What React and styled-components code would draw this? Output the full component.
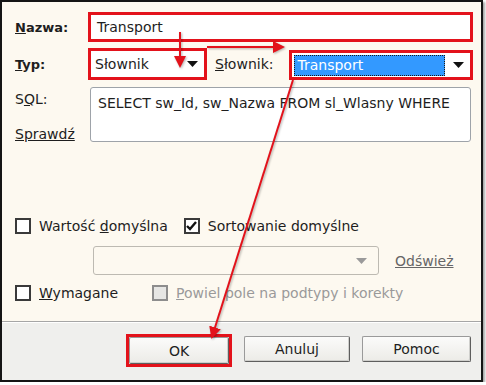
import React from 'react';
import styled, { createGlobalStyle } from 'styled-components';

const GlobalStyle = createGlobalStyle`
  html, body {
    margin: 0;
    padding: 0;
    background: #ffffff;
  }
  body {
    font-family: "DejaVu Sans", Verdana, sans-serif;
    font-size: 14px;
    color: #1e1e1e;
  }
`;

const RED = '#e3121b';

const Frame = styled.div`
  position: relative;
  width: 483px;
  height: 382px;
  box-sizing: border-box;
  border: 2px solid #151515;
  display: flex;
  flex-direction: column;
  box-shadow: 2px 2px 2px rgba(0, 0, 0, 0.35);
  overflow: hidden;
`;

const Body = styled.div`
  flex: 1;
  background: #fdf9f0;
  padding: 10px 8px 0 13px;
  display: flex;
  flex-direction: column;
`;

const Row = styled.div`
  display: flex;
  align-items: ${({ $align }) => $align || 'center'};
  height: ${({ $h }) => $h}px;
  margin-top: ${({ $mt }) => $mt || 0}px;
`;

const Label = styled.div`
  width: 73px;
  flex-shrink: 0;
  font-weight: ${({ $bold }) => ($bold ? 'bold' : 'normal')};
  font-size: ${({ $bold }) => ($bold ? '13px' : '14px')};
  color: #1e1e1e;
`;

const LabelColumn = styled.div`
  width: 73px;
  flex-shrink: 0;
  height: 100%;
  display: flex;
  flex-direction: column;
  justify-content: space-between;
  padding: 4px 0 0;
  box-sizing: border-box;
`;

const Link = styled.span`
  text-decoration: underline;
  color: ${({ $muted }) => ($muted ? '#666' : '#1e1e1e')};
`;

const U = styled.span`
  text-decoration: underline;
`;

const Highlight = styled.div`
  box-sizing: border-box;
  border: 3px solid ${RED};
  background: #ffffff;
  width: ${({ $w }) => ($w ? `${$w}px` : 'auto')};
  flex: ${({ $w }) => ($w ? 'none' : '1')};
  height: ${({ $h }) => $h}px;
  display: flex;
  align-items: center;
  padding: 0 6px 0 ${({ $pl }) => $pl || 6}px;
`;

const FieldText = styled.span`
  flex: 1;
  white-space: nowrap;
`;

const Selected = styled.span`
  flex: 1;
  height: 19px;
  margin-right: 8px;
  background: #3399ff;
  color: #ffffff;
  border: 1px dotted #1a1a1a;
  display: flex;
  align-items: center;
  padding-left: 2px;
`;

const Arrow = ({ muted }) => (
  <svg width="11" height="6" viewBox="0 0 11 6" style={{ flexShrink: 0 }}>
    <path d="M0 0 L11 0 L5.5 6 Z" fill={muted ? '#9a9a9a' : '#111'} />
  </svg>
);

const MidLabel = styled.span`
  margin: 0 16px 0 8px;
  white-space: nowrap;
`;

const TextArea = styled.div`
  flex: 1;
  height: 100%;
  margin: 0 2px;
  box-sizing: border-box;
  border: 1px solid #9ea3a9;
  border-radius: 3px;
  background: #ffffff;
  padding: 7px 0 0 7px;
  white-space: nowrap;
  overflow: hidden;
`;

const CheckRow = styled.div`
  display: flex;
  align-items: center;
  height: 18px;
  margin-top: ${({ $mt }) => $mt}px;
`;

const CheckItem = styled.label`
  display: flex;
  align-items: center;
  gap: 8px;
  margin-right: ${({ $mr }) => $mr || 0}px;
  color: ${({ $disabled }) => ($disabled ? '#9a9a9a' : '#1e1e1e')};
  white-space: nowrap;
`;

const Box = styled.span`
  width: 16px;
  height: 16px;
  box-sizing: border-box;
  border: 2px solid ${({ $disabled }) => ($disabled ? '#8d8d8d' : '#3a3a3a')};
  background: ${({ $disabled }) => ($disabled ? '#e6e6e4' : '#ffffff')};
  display: flex;
  align-items: center;
  justify-content: center;
`;

const Check = ({ checked, disabled, children, mr }) => (
  <CheckItem $disabled={disabled} $mr={mr}>
    <Box $disabled={disabled}>
      {checked && (
        <svg width="11" height="10" viewBox="0 0 11 10">
          <path d="M1 5 L4 8 L10 1" stroke="#111" strokeWidth="2.4" fill="none" />
        </svg>
      )}
    </Box>
    <span>{children}</span>
  </CheckItem>
);

const ComboRow = styled.div`
  display: flex;
  align-items: center;
  height: 29px;
  margin-top: 11px;
  padding-left: 78px;
`;

const DisabledCombo = styled.div`
  width: 286px;
  height: 100%;
  box-sizing: border-box;
  border: 1px solid #bdbab2;
  border-radius: 3px;
  display: flex;
  align-items: center;
  justify-content: flex-end;
  padding-right: 11px;
  margin-right: 16px;
`;

const Footer = styled.div`
  height: 59px;
  box-sizing: border-box;
  border-top: 1px solid #a6a6a6;
  box-shadow: inset 0 1px 0 #ffffff;
  background: #efefed;
  display: flex;
  align-items: flex-start;
  padding: 12px 0 0 124px;
  gap: 12px;
`;

const OkHighlight = styled.div`
  border: 3px solid ${RED};
  padding: 0;
  display: flex;
`;

const Button = styled.button`
  width: ${({ $w }) => $w}px;
  height: ${({ $h }) => $h || 26}px;
  margin-top: ${({ $mt }) => $mt || 0}px;
  font-family: "DejaVu Sans", Verdana, sans-serif;
  font-size: 14px;
  color: #1e1e1e;
  background: linear-gradient(#fbfbfa, #ecebe7);
  border: 1px solid #9a9a9a;
  border-right-color: #5e5e5e;
  border-bottom-color: #5e5e5e;
  border-radius: 2px;
  box-shadow: inset -1px -1px 0 #cfcfcc;
  padding: 0;
`;

const Overlay = styled.svg`
  position: absolute;
  left: -2px;
  top: -2px;
  width: 486px;
  height: 385px;
  pointer-events: none;
  filter: drop-shadow(1px 1px 1px rgba(0, 0, 0, 0.3));
`;

const Arrows = () => (
  <Overlay viewBox="0 0 486 385">
    <defs>
      <marker id="head" markerWidth="6" markerHeight="6" refX="5" refY="3" orient="auto" markerUnits="strokeWidth">
        <path d="M0 0 L6 3 L0 6 Z" fill={RED} />
      </marker>
    </defs>
    <g stroke={RED} strokeWidth="2" fill="none">
      <line x1="180" y1="32" x2="180" y2="66" markerEnd="url(#head)" />
      <line x1="207" y1="47" x2="283" y2="47" markerEnd="url(#head)" />
      <line x1="293" y1="80" x2="212" y2="337" markerEnd="url(#head)" />
    </g>
  </Overlay>
);

export default function App() {
  return (
    <>
      <GlobalStyle />
      <Frame>
        <Body>
          <Row $h={30}>
            <Label $bold>
              <U>N</U>azwa:
            </Label>
            <Highlight $h={30} $pl={6}>
              <FieldText>Transport</FieldText>
            </Highlight>
          </Row>
          <Row $h={32} $mt={6} $align="flex-end">
            <Label $bold style={{ alignSelf: 'center' }}>
              <U>T</U>yp:
            </Label>
            <Highlight $w={119} $h={32} $pl={4}>
              <FieldText>Słownik</FieldText>
              <Arrow />
            </Highlight>
            <MidLabel style={{ alignSelf: 'center' }}>
              <U>S</U>łownik:
            </MidLabel>
            <Highlight $h={30} $pl={2}>
              <Selected>Transport</Selected>
              <Arrow />
            </Highlight>
          </Row>
          <Row $h={55} $mt={7} $align="stretch">
            <LabelColumn>
              <span>
                S<U>Q</U>L:
              </span>
              <Link>Sprawdź</Link>
            </LabelColumn>
            <TextArea>SELECT sw_Id, sw_Nazwa FROM sl_Wlasny WHERE</TextArea>
          </Row>
          <CheckRow $mt={75}>
            <Check mr={16}>
              Wartość <U>d</U>omyślna
            </Check>
            <Check checked>Sortowanie domyślne</Check>
          </CheckRow>
          <ComboRow>
            <DisabledCombo>
              <Arrow muted />
            </DisabledCombo>
            <Link $muted>Odśwież</Link>
          </ComboRow>
          <CheckRow $mt={9}>
            <Check mr={34}>
              <U>W</U>ymagane
            </Check>
            <Check disabled>
              <U>P</U>owiel pole na podtypy i korekty
            </Check>
          </CheckRow>
        </Body>
        <Footer>
          <OkHighlight>
            <Button $w={100} $h={27}>OK</Button>
          </OkHighlight>
          <Button $w={106} $mt={2}>Anuluj</Button>
          <Button $w={109} $mt={2}>Pomoc</Button>
        </Footer>
        <Arrows />
      </Frame>
    </>
  );
}
